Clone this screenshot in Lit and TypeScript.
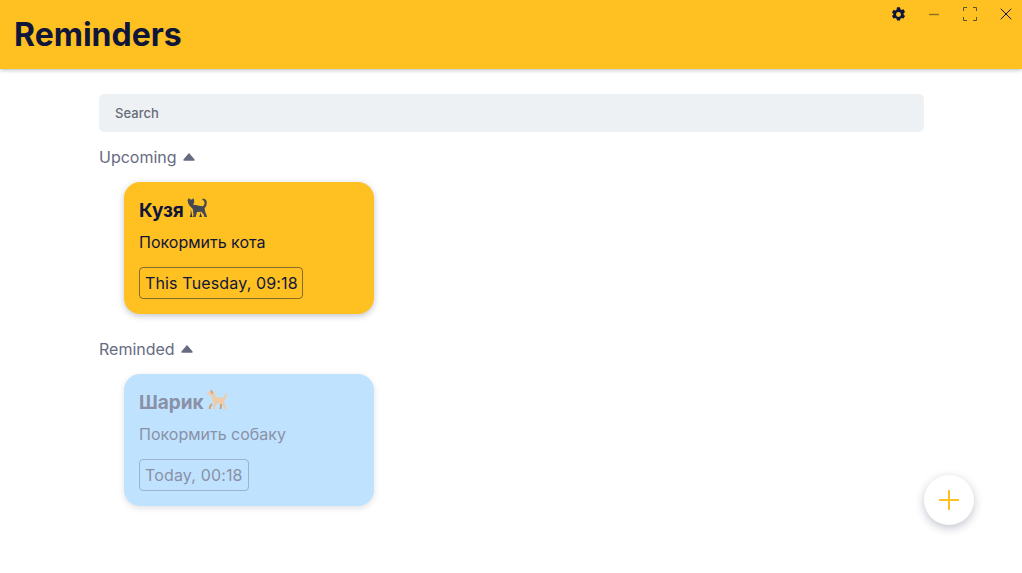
import { LitElement, html, css, svg } from "lit";
import { customElement } from "lit/decorators.js";

const cat = svg`<svg class="pet" width="22" height="22" viewBox="0 0 22 22"><path fill="#434853" d="M1.600 3.600 L2.600 1 L4.400 2.600 L6 2.600 L7.400 1 L8.200 4 Q8.400 6.400 7 7.800 Q10 7.800 12 8.400 Q15 9 16.800 9.200 Q18.600 8.400 18.600 5.800 Q18.600 3.600 16.600 3 Q15.800 2.400 16.800 1.400 Q20.800 1.800 20.800 5.800 Q20.800 9.600 18.600 11 L19 14 L20.600 18.200 L21 20 L18.400 20 L17.800 17.800 L15.400 14.800 L11 15 L9.600 20 L7 20 L7 18.800 L7.600 18.400 L6.800 12 Q3.200 9 2.400 6.800 Z"/><path fill="#2f333d" d="M4.800 12 L6.400 20 L4 20 L3.800 18.800 L4.600 18.400 Z M14 15 L16 20 L13.600 20 L13.200 18.800 L14 18.400 Z"/></svg>`;

const dog = svg`<svg class="pet" width="22" height="22" viewBox="0 0 22 22"><path fill="#efcca8" d="M1 4.400 L4 2.600 L4.400 0.800 L6.400 2 L8 2.400 L9 5.400 L10 8 Q13 9 15.600 8.800 Q18 8.600 18.600 6 Q18.800 4 20.400 4.400 Q21.600 5 21 6.400 Q20.400 5.600 20 7 Q19.800 10 18.400 11.600 L18.400 14.400 L20.400 18.400 L20.400 20 L18.400 20 L18.200 18.400 L15.600 14.600 L11 14.600 L9 18 L9 20 L6.800 20 L7 18 L8 15 L6.600 12 L5.600 6.400 L2 6 Z"/><path fill="#cf9a6c" d="M4.400 0.800 L6.400 2 L7 5 L5.400 4.400 Z M5.600 14 L6.400 16 L4.600 18 L4.600 20 L2.800 20 L3 17.400 Z M14.400 15 L16 15 L15.400 20 L13.400 20 Z"/></svg>`;

const caret = svg`<svg width="12" height="8" viewBox="0 0 12 8"><path d="M6 1L11 7H1z" fill="#666b80" stroke="#666b80" stroke-width="1.400" stroke-linejoin="round"/></svg>`;

@customElement("app-root")
export class AppRoot extends LitElement {
  static styles = css`
    :host {
      display: block;
      position: relative;
      width: 1022px;
      height: 573px;
      overflow: hidden;
      background: #fff;
      font-family: Inter, "Liberation Sans", sans-serif;
      color: #10163a;
    }
    header {
      height: 69px;
      background: #ffc021;
      box-shadow: 0 1px 4px rgba(16, 22, 58, 0.3);
      display: flex;
      justify-content: space-between;
      padding-left: 14px;
      position: relative;
    }
    h1 {
      margin: 0;
      font-size: 32px;
      line-height: 36px;
      padding-top: 17px;
      font-weight: 700;
    }
    .controls {
      display: flex;
      height: 28px;
      margin-right: -2px;
    }
    .controls span {
      width: 36px;
      height: 28px;
      display: flex;
      align-items: center;
      justify-content: center;
    }
    main {
      padding: 25px 98px 0 99px;
    }
    .search {
      height: 38px;
      background: #eef1f4;
      border-radius: 5px;
      display: flex;
      align-items: center;
      padding-left: 16px;
      font-size: 13px;
      font-weight: 500;
      letter-spacing: 0.05px;
      color: #666b78;
    }
    .head {
      display: flex;
      align-items: center;
      gap: 6px;
      font-size: 16px;
      line-height: 18px;
      color: #666b80;
    }
    .head.first {
      margin-top: 16px;
    }
    .head.second {
      margin-top: 26px;
    }
    .card {
      box-sizing: border-box;
      width: 250px;
      height: 132px;
      margin: 16px 0 0 25px;
      padding: 16px 15px 0;
      border-radius: 16px;
      background: #ffc021;
      box-shadow: 0 2px 6px rgba(16, 22, 58, 0.25);
    }
    .card.done {
      background: #bfe3ff;
      color: #8a90a6;
      box-shadow: 0 2px 6px rgba(16, 22, 58, 0.13);
    }
    .title {
      display: flex;
      align-items: flex-start;
      gap: 2px;
      height: 25px;
      font-size: 19px;
      line-height: 25px;
      font-weight: 700;
    }
    .pet {
      margin-top: -1px;
    }
    .text {
      margin-top: 9px;
      font-size: 16px;
      line-height: 20px;
    }
    .chip {
      display: inline-block;
      margin-top: 15px;
      height: 32px;
      box-sizing: border-box;
      padding: 0 4px 0 5px;
      line-height: 30px;
      font-size: 16px;
      letter-spacing: 0.15px;
      border: 1px solid rgba(16, 22, 58, 0.5);
      border-radius: 4px;
    }
    .done .chip {
      border-color: #9db3cc;
      padding-right: 5px;
    }
    .fab {
      position: absolute;
      left: 924px;
      top: 475px;
      width: 50px;
      height: 50px;
      border-radius: 50%;
      background: #fff;
      box-shadow: 0 3px 10px rgba(16, 22, 58, 0.25);
      display: flex;
      align-items: center;
      justify-content: center;
    }
  `;

  render() {
    return html`
      <header>
        <h1>Reminders</h1>
        <div class="controls">
          <span>
            <svg width="15" height="15" viewBox="0 0 14 14">
              <path fill="#10163a" fill-rule="evenodd" d="M5.600 0.300h2.800l.4 1.700 1.200.7 1.700-.5 1.400 2.400-1.300 1.200v1.400l1.300 1.200-1.400 2.400-1.700-.5-1.200.7-.4 1.700H5.600l-.4-1.700-1.200-.7-1.700.5-1.400-2.400 1.300-1.200V6.300L.9 5.100l1.400-2.400 1.700.5 1.200-.7zM7 4.700a2.300 2.300 0 1 0 0 4.600 2.300 2.300 0 0 0 0-4.600z"/>
            </svg>
          </span>
          <span>
            <svg width="12" height="12" viewBox="0 0 12 12"><path d="M1 6.500h10" stroke="#8a7020" stroke-width="1.400" fill="none"/></svg>
          </span>
          <span>
            <svg width="14" height="14" viewBox="0 0 14 14"><path d="M.5 4V.5H4M10 .5h3.500V4M13.500 10v3.500H10M4 13.500H.5V10" stroke="#5c5228" stroke-width="1" fill="none"/></svg>
          </span>
          <span>
            <svg width="12" height="12" viewBox="0 0 12 12"><path d="M.7.7l10.600 10.600M11.300.7L.7 11.300" stroke="#10163a" stroke-width="1" fill="none"/></svg>
          </span>
        </div>
      </header>
      <main>
        <div class="search">Search</div>
        <div class="head first">Upcoming ${caret}</div>
        <div class="card">
          <div class="title">Кузя ${cat}</div>
          <div class="text">Покормить кота</div>
          <div class="chip">This Tuesday, 09:18</div>
        </div>
        <div class="head second">Reminded ${caret}</div>
        <div class="card done">
          <div class="title">Шарик ${dog}</div>
          <div class="text">Покормить собаку</div>
          <div class="chip">Today, 00:18</div>
        </div>
      </main>
      <div class="fab">
        <svg width="20" height="20" viewBox="0 0 20 20"><path d="M0 10h20M10 0v20" stroke="#ffc021" stroke-width="2" fill="none"/></svg>
      </div>
    `;
  }
}
